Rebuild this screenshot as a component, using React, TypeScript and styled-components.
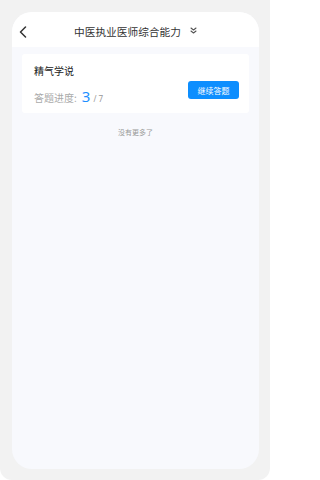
import styled, { createGlobalStyle } from 'styled-components'

const GlobalStyle = createGlobalStyle`
  html, body {
    margin: 0;
    padding: 0;
    background: #ffffff;
  }
  * {
    box-sizing: border-box;
  }
`

export default function App() {
  return (
    <>
      <GlobalStyle />
      <Frame>
        <Screen>
          <Header>
            <BackButton>
              <svg width="8" height="12" viewBox="0 0 8 12" fill="none">
                <path d="M6.5 1L1.5 6l5 5" stroke="#333" strokeWidth="1.5" strokeLinecap="round" strokeLinejoin="round" />
              </svg>
            </BackButton>
            <Title>中医执业医师综合能力</Title>
            <MoreIcon>
              <svg width="7" height="7" viewBox="0 0 7 7" fill="none">
                <path d="M1 1l2.5 2 2.5-2M1 4l2.5 2 2.5-2" stroke="#555" strokeWidth="1.1" strokeLinecap="round" strokeLinejoin="round" />
              </svg>
            </MoreIcon>
          </Header>
          <Body>
            <Card>
              <CardInfo>
                <CardTitle>精气学说</CardTitle>
                <Progress>
                  <ProgressLabel>答题进度:</ProgressLabel>
                  <Current>3</Current>
                  <Total>/ 7</Total>
                </Progress>
              </CardInfo>
              <ContinueButton>继续答题</ContinueButton>
            </Card>
            <NoMore>没有更多了</NoMore>
          </Body>
        </Screen>
      </Frame>
    </>
  )
}

const Frame = styled.div`
  width: 270px;
  height: 480px;
  padding: 12px 11px 11px 12px;
  background: #f2f2f2;
  border-radius: 0 0 12px 12px;
  font-family: "Noto Sans CJK SC", "Noto Sans", sans-serif;
`

const Screen = styled.div`
  height: 100%;
  display: flex;
  flex-direction: column;
  background: #f8f9fd;
  border-radius: 20px;
  overflow: hidden;
`

const Header = styled.div`
  position: relative;
  height: 35px;
  flex-shrink: 0;
  display: flex;
  align-items: center;
  justify-content: center;
  gap: 9px;
  background: #ffffff;
  padding-top: 3px;
`

const BackButton = styled.div`
  position: absolute;
  left: 7px;
  top: 14px;
  display: flex;
`

const Title = styled.div`
  font-size: 10.7px;
  color: #333;
`

const MoreIcon = styled.div`
  display: flex;
  margin-top: -1px;
`

const Body = styled.div`
  flex: 1;
  padding: 7px 10px 0;
  display: flex;
  flex-direction: column;
`

const Card = styled.div`
  height: 59px;
  background: #ffffff;
  border-radius: 3px;
  padding: 10px 10px 0 12px;
  display: flex;
  justify-content: space-between;
  align-items: flex-start;
`

const CardInfo = styled.div`
  display: flex;
  flex-direction: column;
`

const CardTitle = styled.div`
  font-size: 10px;
  font-weight: 400;
  color: #222;
  line-height: 14px;
`

const Progress = styled.div`
  display: flex;
  align-items: baseline;
  margin-top: 8px;
`

const ProgressLabel = styled.span`
  font-size: 10px;
  color: #aaa;
`

const Current = styled.span`
  font-family: "Noto Sans", sans-serif;
  font-size: 15px;
  color: #1e8fff;
  margin-left: 5px;
`

const Total = styled.span`
  font-family: "Noto Sans", sans-serif;
  font-size: 8px;
  color: #999;
  margin-left: 3px;
`

const ContinueButton = styled.div`
  margin-top: 17px;
  width: 51px;
  height: 18px;
  background: #0d8efe;
  border-radius: 3px;
  color: #fff;
  font-size: 8px;
  display: flex;
  align-items: center;
  justify-content: center;
`

const NoMore = styled.div`
  margin-top: 14px;
  text-align: center;
  font-size: 7px;
  color: #999;
`
